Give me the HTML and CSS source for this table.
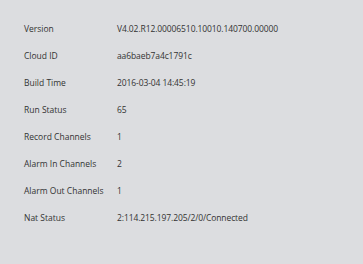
FILE: index.html
```html
<!DOCTYPE html>
<html lang="en">
<head>
<meta charset="UTF-8">
<meta name="viewport" content="width=device-width, initial-scale=1.0">
<title>Device Info</title>
<link rel="stylesheet" href="styles.css">
</head>
<body>
<div class="info">
  <div class="row"><span class="label">Version</span><span class="value">V4.02.R12.00006510.10010.140700.00000</span></div>
  <div class="row"><span class="label">Cloud ID</span><span class="value">aa6baeb7a4c1791c</span></div>
  <div class="row"><span class="label">Build Time</span><span class="value">2016-03-04 14:45:19</span></div>
  <div class="row"><span class="label">Run Status</span><span class="value">65</span></div>
  <div class="row"><span class="label">Record Channels</span><span class="value">1</span></div>
  <div class="row"><span class="label">Alarm In Channels</span><span class="value">2</span></div>
  <div class="row"><span class="label">Alarm Out Channels</span><span class="value">1</span></div>
  <div class="row"><span class="label">Nat Status</span><span class="value">2:114.215.197.205/2/0/Connected</span></div>
</div>
</body>
</html>
```

FILE: styles.css
```css
body { margin: 0; background: #dcdde0; color: #333; font-family: "Open Sans", "Noto Sans", sans-serif; font-size: 8.5px; }
.info { padding: 15px 0 0 24px; }
.row { display: grid; grid-template-columns: 93px auto; height: 27px; line-height: 27px; white-space: nowrap; }
.value { letter-spacing: -0.1px; }
```
